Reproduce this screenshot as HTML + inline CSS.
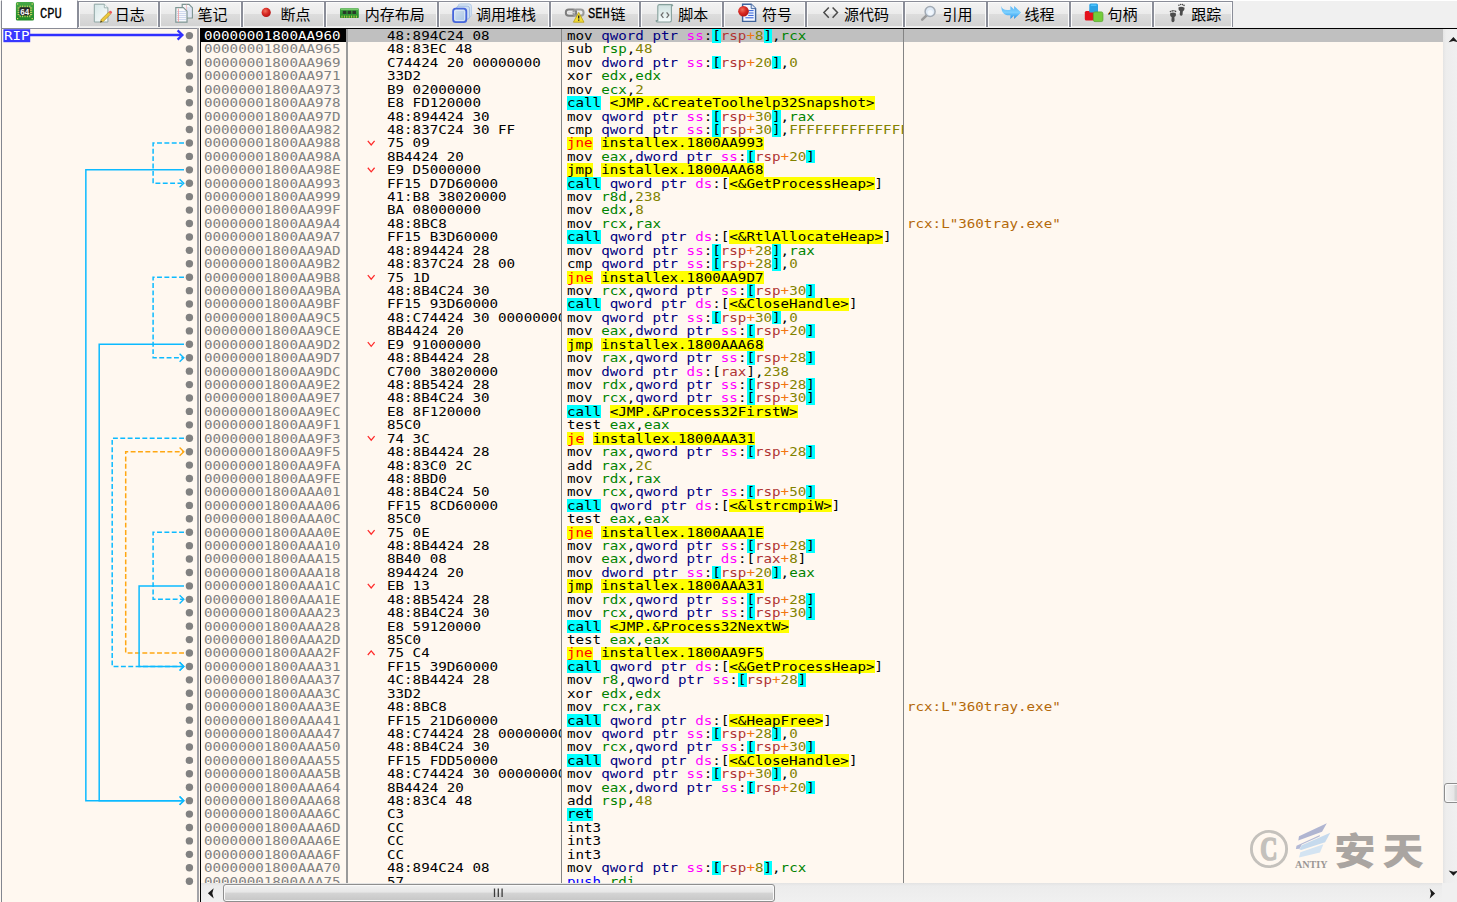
<!DOCTYPE html>
<html lang="zh-CN"><head><meta charset="utf-8"><title>x64dbg - CPU</title>
<style>
*{box-sizing:border-box}
html,body{margin:0;padding:0;overflow:hidden}
body{width:1457px;height:902px;overflow:hidden;position:relative;background:#fff8f0;font-family:"Liberation Sans","Noto Sans CJK SC",sans-serif}
#tabs{position:absolute;left:0;top:0;width:1457px;height:28px;background:#f0f0f0;border-top:1px solid #fff}
.tab{position:absolute;top:0;height:26px;border:1.2px solid #8a8d98;border-bottom:none;background:linear-gradient(#f3f3f3 0,#ebebeb 11.5px,#dddddd 12px,#d2d2d2 24px,#ececec 24.5px,#ececec 100%);box-shadow:inset 1px 1px 0 #fbfbfb,inset -1px 0 0 #fbfbfb}
.tab.sel{top:-1px;height:28px;background:#fff;box-shadow:none;border-top-color:#fff;border-left-color:#83868f}
.tl b{display:inline-block;font-weight:normal;font-size:15.2px;transform:scaleX(0.8);transform-origin:0 50%;width:22.4px;vertical-align:top;margin-left:1.7px;position:relative;top:-2.5px;-webkit-text-stroke:0.3px #000}
.tl{position:absolute;top:7.2px;height:17px;line-height:17px;font-size:15px;color:#000;white-space:pre;font-family:"Liberation Mono","Noto Sans CJK SC",sans-serif}
.ti{position:absolute}
#frameL{position:absolute;left:1px;top:1px;width:1.3px;height:901px;background:#838690}
#frameT{position:absolute;left:2px;top:28px;width:197px;height:1px;background:#8a8c96}
#sideR{position:absolute;left:197.3px;top:28px;width:1.9px;height:874px;background:#a3a3a8}
#blkL{position:absolute;left:200px;top:28px;width:1px;height:874px;background:#000}
#blkT{position:absolute;left:200px;top:28px;width:1257px;height:1px;background:#000}
.sep{position:absolute;top:29px;height:854px;background:#848484}
#selA{position:absolute;left:200px;top:29px;width:146.3px;height:13px;background:#000}
#selR{position:absolute;left:347.8px;top:29px;width:1095.2px;height:13px;background:#c0c0c0}
.col{position:absolute;top:0;height:883.3px;overflow:hidden}
#dis{position:absolute;left:0;top:0;width:1443px;height:883.3px;overflow:hidden;white-space:pre;font-family:"DejaVu Sans Mono","Liberation Mono",monospace;font-size:12px;line-height:13.4219px;color:#000}
.row{position:absolute;left:0;width:1443px;height:13.4219px}
.cel{position:absolute;top:0;height:13.4219px;overflow-x:clip;overflow-y:visible}
.cel p{position:absolute;left:0;top:0;margin:0;height:13.4219px;transform-origin:0 0;transform:scaleX(1.18221)}
.ca{left:201px;width:145.4px}.ca p{left:2.7px}
.cb{left:348px;width:213.4px}.cb p{left:38.6px}
.cd{left:562.6px;width:340.3px}.cd p{left:4.2px}
.cc{left:904.1px;width:538.9px;color:#b4690a}.cc p{left:2.6px}
.row i{font-style:normal}
.h{position:absolute;height:13.4219px}
.ca{color:#808080}
.cip .ca{color:#fff}
.s{color:#000080}.g{color:#ff00ff}.r{color:#008300}.b{color:#b03434}.o{color:#f27711}.v{color:#828200}.p{color:#0000ff}
.j{color:#ff0000}
.hc{background:#00ffff}.hy{background:#ffff00}
#side{position:absolute;left:0;top:0}
#hsb{position:absolute;left:201px;top:883.3px;width:1241px;height:19px;background:linear-gradient(#e3e3e3 0,#ececec 3px,#f0f0f0 100%)}
#hth{position:absolute;left:22.3px;top:0.6px;width:552px;height:18.6px;border:1.2px solid #8e8e8e;border-radius:3px;background:linear-gradient(#f2f2f2 0,#e6e6e6 45%,#d4d4d4 50%,#c6c6c6 100%);box-shadow:inset 0 0 0 1px #fafafa}
#vsb{position:absolute;left:1443px;top:29px;width:14px;height:854px;overflow:hidden;background:linear-gradient(90deg,#e4e4e4 0,#ededed 3px,#f0f0f0 100%)}
#vth{position:absolute;left:0.6px;top:754px;width:22px;height:19.6px;border:1.2px solid #8e8e8e;border-radius:3px;background:linear-gradient(90deg,#f2f2f2 0,#e6e6e6 45%,#d4d4d4 50%,#c6c6c6 100%);box-shadow:inset 0 0 0 1px #fafafa}
#corner{position:absolute;left:1442px;top:883px;width:15px;height:19px;background:#f0f0f0}
#wm{position:absolute;left:0;top:0}
</style></head>
<body>
<div id="tabs"><div class="tab sel" style="left:1px;width:77.2px"></div><div class="tab" style="left:78.2px;width:81.1px"></div><div class="tab" style="left:159.3px;width:83px"></div><div class="tab" style="left:242.3px;width:82.8px"></div><div class="tab" style="left:325.1px;width:112.5px"></div><div class="tab" style="left:437.6px;width:112.1px"></div><div class="tab" style="left:549.7px;width:90.5px"></div><div class="tab" style="left:640.2px;width:83px"></div><div class="tab" style="left:723.2px;width:82.8px"></div><div class="tab" style="left:806px;width:98px"></div><div class="tab" style="left:904px;width:82.8px"></div><div class="tab" style="left:986.8px;width:82.9px"></div><div class="tab" style="left:1069.7px;width:83px"></div><div class="tab" style="left:1152.7px;width:80.8px"></div><span class="tl" style="left:38.4px"><b>CPU</b></span><span class="tl" style="left:114.7px">日志</span><span class="tl" style="left:197.6px">笔记</span><span class="tl" style="left:280.5px">断点</span><span class="tl" style="left:364.7px">内存布局</span><span class="tl" style="left:475.9px">调用堆栈</span><span class="tl" style="left:586.3px"><b>SEH</b>链</span><span class="tl" style="left:678.3px">脚本</span><span class="tl" style="left:761.9px">符号</span><span class="tl" style="left:844px">源代码</span><span class="tl" style="left:942.4px">引用</span><span class="tl" style="left:1024.5px">线程</span><span class="tl" style="left:1107.5px">句柄</span><span class="tl" style="left:1191.3px">跟踪</span><svg class="ti" style="left:0;top:-1px" width="1457" height="29" viewBox="0 0 1457 29"><defs><linearGradient id="gPaper" x1="0" y1="0" x2="1" y2="1"><stop offset="0" stop-color="#d4e6e6"/><stop offset="1" stop-color="#ffffff"/></linearGradient><linearGradient id="gSq" x1="0" y1="0" x2="1" y2="1"><stop offset="0" stop-color="#d6e4f2"/><stop offset="1" stop-color="#a6c2e2"/></linearGradient><linearGradient id="gScr" x1="0" y1="0" x2="0" y2="1"><stop offset="0" stop-color="#cfe2e0"/><stop offset="1" stop-color="#f6fcfc"/></linearGradient><linearGradient id="gGrn" x1="0" y1="0" x2="0" y2="1"><stop offset="0" stop-color="#46a846"/><stop offset="1" stop-color="#1f8a25"/></linearGradient><linearGradient id="gArr" x1="0" y1="0" x2="0" y2="1"><stop offset="0" stop-color="#58b4f4"/><stop offset="0.5" stop-color="#7cd0ff"/><stop offset="1" stop-color="#1e8ee8"/></linearGradient><radialGradient id="gRed" cx="0.4" cy="0.35" r="0.7"><stop offset="0" stop-color="#f0705c"/><stop offset="0.5" stop-color="#d82a24"/><stop offset="1" stop-color="#b01010"/></radialGradient></defs><rect x="15.9" y="2.1" width="18.1" height="18.4" rx="1.6" fill="url(#gGrn)"/><g stroke="#e6d66a" stroke-width="0.9"><path d="M20.2 5.6v2M22.6 5.6v2M25 5.6v2M27.4 5.6v2M29.8 5.6v2M20.2 15.2v2M22.6 15.2v2M25 15.2v2M27.4 15.2v2M29.8 15.2v2M17.6 8h2.2M17.6 10.2h2.2M17.6 12.4h2.2M17.6 14.6h2.2M30 8h2.2M30 10.2h2.2M30 12.4h2.2M30 14.6h2.2"/></g><g fill="#e6d66a"><rect x="17" y="3.4" width="1.2" height="1.2"/><rect x="31.6" y="3.4" width="1.2" height="1.2"/><rect x="17" y="18" width="1.2" height="1.2"/><rect x="31.6" y="18" width="1.2" height="1.2"/></g><rect x="19.4" y="7.3" width="10.6" height="8.2" rx="1.4" fill="#262626"/><text x="24.7" y="14.5" text-anchor="middle" font-family="'Liberation Sans',sans-serif" font-weight="bold" font-size="8.4" fill="#f4f4f4" textLength="9" lengthAdjust="spacingAndGlyphs">64</text><path d="M94.3 4.2h10l3.6 3.6v14.2h-13.6z" fill="url(#gPaper)" stroke="#8fa6a4" stroke-width="1"/><path d="M104.3 4.2v3.6h3.6" fill="#f4fafa" stroke="#8fa6a4" stroke-width="0.8"/><path d="M100.4 22.3l0.9-3 7.4-7.2 2 2-7.3 7.3z" fill="#ecc83c" stroke="#a88a24" stroke-width="0.6"/><path d="M108.7 12.1l1-1a1 1 0 0 1 1.4 0l0.7 0.7a1 1 0 0 1 0 1.4l-1.1 0.9z" fill="#ee5a5a"/><path d="M100.3 22.4l0.6-1.8 1.2 1.2z" fill="#2a2a2a"/><path d="M182.2 4.4h6.8l3.4 3.4v10.2h-10.2z" fill="#f6f8fb" stroke="#7f9694" stroke-width="1.2"/><g stroke="#b7c6e6" stroke-width="0.7"><path d="M186.8 8h5M186.8 10h5M186.8 12h5M186.8 14h5M186.8 16h5"/></g><path d="M186.4 4.4v13.6" stroke="#f0a8a8" stroke-width="0.7"/><path d="M175.8 7.6h7.6l3.6 3.6v10.9h-11.2z" fill="#fbfcfe" stroke="#7f9694" stroke-width="1.2"/><g stroke="#b4c4e6" stroke-width="0.7"><path d="M176.8 11.6h9.2M176.8 13.6h9.2M176.8 15.6h9.2M176.8 17.6h9.2M176.8 19.6h9.2"/></g><path d="M178.4 8.6v13.4" stroke="#f09c9c" stroke-width="0.9"/><circle cx="266.2" cy="12.4" r="4.6" fill="url(#gRed)"/><rect x="340" y="8.2" width="18.8" height="9.8" rx="0.8" fill="url(#gGrn)"/><rect x="340.8" y="8.8" width="17.2" height="1.2" fill="#78c86c"/><g fill="#283a28"><rect x="342.8" y="10.8" width="3.6" height="3.2"/><rect x="347.6" y="10.8" width="3.6" height="3.2"/><rect x="352.4" y="10.8" width="3.6" height="3.2"/></g><g stroke="#d8cc50" stroke-width="0.9"><path d="M342 15.6v2.2M344.4 15.6v2.2M346.8 15.6v2.2M349.2 15.6v2.2M351.6 15.6v2.2M354 15.6v2.2M356.4 15.6v2.2"/></g><rect x="458" y="3.9" width="13.4" height="13.2" rx="2.4" fill="#d8e6f4" stroke="#b4cbe8" stroke-width="1"/><rect x="456.4" y="6.2" width="13.2" height="13" rx="2.4" fill="#cfdff1" stroke="#a0bce2" stroke-width="1"/><rect x="453.1" y="8.7" width="13.2" height="13.4" rx="2.6" fill="url(#gSq)" stroke="#4666dc" stroke-width="1.8"/><rect x="454.8" y="10.4" width="9.8" height="10" rx="1.2" fill="none" stroke="#e4eef8" stroke-width="0.8"/><rect x="565.8" y="9.6" width="10.4" height="6.2" rx="3.1" fill="none" stroke="#7e7e7e" stroke-width="2"/><rect x="573.4" y="9.6" width="10.2" height="6.2" rx="3.1" fill="none" stroke="#9a9a9a" stroke-width="2"/><path d="M568 12.6h6" stroke="#d8d8d8" stroke-width="0.9"/><path d="M578.7 12.4l5.3 9.8h-10.6z" fill="#f2dc34" stroke="#b8a018" stroke-width="0.8" stroke-linejoin="round"/><path d="M578.7 15.4v3.2M578.7 19.6v1.2" stroke="#2a2a2a" stroke-width="1.4"/><path d="M659.2 4.6h12.4q1.4 0.2 1 1.2h-1.2v14.4q0 1.6-1.6 1.8h-12.6q-1.2-0.2-1-1.4h1.6v-14.4q0-1.4 1.4-1.6z" fill="url(#gScr)" stroke="#86a09c" stroke-width="1.1"/><path d="M663.4 12.4l-2.2 2.7 2.2 2.7M666.6 12.4l2.2 2.7-2.2 2.7" fill="none" stroke="#6e6e6e" stroke-width="1.3"/><path d="M742.6 4.2h8.6l4.4 4.4v12.8h-13z" fill="#f2f6ff" stroke="#3f639c" stroke-width="1.4"/><path d="M751.2 4.2v4.4h4.4" fill="#dfe8f8" stroke="#3f639c" stroke-width="0.9"/><g stroke="#2f5fd8" stroke-width="1"><path d="M748.2 10.6h5.4M748.2 13h5.4M748.2 15.4h5.4M745.4 17.8h8.2"/></g><circle cx="743.5" cy="11.3" r="5.3" fill="url(#gRed)"/><path d="M828.8 7.4l-4.9 5.2 4.9 5.2M832.6 7.4l4.9 5.2-4.9 5.2" fill="none" stroke="#4a4a4a" stroke-width="1.5"/><path d="M922.2 19.6l4.2-4" stroke="#9a9a9a" stroke-width="2.6" stroke-linecap="round"/><circle cx="930.1" cy="11.5" r="5" fill="#dfeaf6" stroke="#a2aab4" stroke-width="1.5"/><circle cx="930.3" cy="12.6" r="2.6" fill="#f2f7fc"/><path d="M1001.5 6C1002 9.8 1005 10.4 1010.4 9.8L1010.4 6L1014.1 9.6L1014.1 6L1021.1 12.4L1014.1 18.9L1014.1 15.4L1010.4 18.9L1010.4 15.2C1004 16 1001 12 1001.5 6Z" fill="url(#gArr)"/><rect x="1089.3" y="3.4" width="8.7" height="9.2" rx="1.6" fill="#2aa2e4"/><rect x="1090.6" y="4.4" width="6.1" height="1.6" rx="0.8" fill="#4cc4ff"/><rect x="1084.8" y="10.9" width="9.2" height="9.7" rx="1.6" fill="#e4121c"/><rect x="1089.3" y="9.6" width="8.7" height="3" rx="1.2" fill="#2aa2e4"/><rect x="1093.4" y="11.9" width="9.5" height="9.7" rx="1.6" fill="#74cc3c" stroke="#58a82c" stroke-width="0.8"/><g fill="#4c4c4c"><path d="M1170 13.4q3-1.6 6 0q0.4 2.4-1.6 3.6l0.2 3.6q-0.4 1.6-1.7 1.6q-1.4 0-1.5-1.8l0.3-3.2q-2-1.4-1.7-3.8z"/><path d="M1178.4 7.4q3-1.6 6.2 0.4q0.2 2.4-1.8 3.6l-0.2 3q-0.4 1.4-1.6 1.3q-1.3-0.1-1.3-1.6l0.4-2.9q-2-1.4-1.7-3.8z"/><circle cx="1170.5" cy="11.6" r="0.8"/><circle cx="1172.2" cy="10.9" r="0.8"/><circle cx="1173.9" cy="10.8" r="0.8"/><circle cx="1175.5" cy="11.4" r="0.8"/><circle cx="1178.9" cy="5.2" r="0.8"/><circle cx="1180.6" cy="4.5" r="0.8"/><circle cx="1182.4" cy="4.6" r="0.8"/><circle cx="1184" cy="5.4" r="0.8"/></g></svg></div>
<div id="frameL"></div><div id="frameT"></div><div id="sideR"></div>
<div id="selA"></div><div id="selR"></div>
<div id="blkL"></div><div id="blkT"></div>
<div class="sep" style="left:346px;width:2px;background:#9a9a9a"></div><div class="sep" style="left:561px;width:1px"></div><div class="sep" style="left:903px;width:1px"></div>
<svg id="side" width="200" height="902" viewBox="0 0 200 902" fill="none"><path d="M184 142.99H153.1V183.25H183.4" stroke="#0cbaff" stroke-width="1.5" stroke-dasharray="4.9 2.45"/><path d="M179.6 179.15L183.8 183.25L179.6 187.35" stroke="#0cbaff" stroke-width="1.4"/><path d="M184 169.83H85.85V800.66H183.4" stroke="#0cbaff" stroke-width="1.5"/><path d="M179.6 796.56L183.8 800.66L179.6 804.76" stroke="#0cbaff" stroke-width="1.4"/><path d="M184 277.2H153.1V357.74H183.4" stroke="#0cbaff" stroke-width="1.5" stroke-dasharray="4.9 2.45"/><path d="M179.6 353.64L183.8 357.74L179.6 361.84" stroke="#0cbaff" stroke-width="1.4"/><path d="M184 344.31H99.2V800.66H183.4" stroke="#0cbaff" stroke-width="1.5"/><path d="M179.6 796.56L183.8 800.66L179.6 804.76" stroke="#0cbaff" stroke-width="1.4"/><path d="M184 438.27H112.2V666.44H183.4" stroke="#0cbaff" stroke-width="1.5" stroke-dasharray="4.9 2.45"/><path d="M179.6 662.34L183.8 666.44L179.6 670.54" stroke="#0cbaff" stroke-width="1.4"/><path d="M184 653.02H125.7V451.69H183.4" stroke="#ffa712" stroke-width="1.5" stroke-dasharray="4.9 2.45"/><path d="M179.6 447.59L183.8 451.69L179.6 455.79" stroke="#ffa712" stroke-width="1.4"/><path d="M184 532.22H153.1V599.33H183.4" stroke="#0cbaff" stroke-width="1.5" stroke-dasharray="4.9 2.45"/><path d="M179.6 595.23L183.8 599.33L179.6 603.43" stroke="#0cbaff" stroke-width="1.4"/><path d="M184 585.91H139.1V666.44H183.4" stroke="#0cbaff" stroke-width="1.5"/><path d="M179.6 662.34L183.8 666.44L179.6 670.54" stroke="#0cbaff" stroke-width="1.4"/><g fill="#818181"><circle cx="189.4" cy="35.61" r="3.7"/><circle cx="189.4" cy="49.03" r="3.7"/><circle cx="189.4" cy="62.45" r="3.7"/><circle cx="189.4" cy="75.88" r="3.7"/><circle cx="189.4" cy="89.3" r="3.7"/><circle cx="189.4" cy="102.72" r="3.7"/><circle cx="189.4" cy="116.14" r="3.7"/><circle cx="189.4" cy="129.56" r="3.7"/><circle cx="189.4" cy="142.99" r="3.7"/><circle cx="189.4" cy="156.41" r="3.7"/><circle cx="189.4" cy="169.83" r="3.7"/><circle cx="189.4" cy="183.25" r="3.7"/><circle cx="189.4" cy="196.67" r="3.7"/><circle cx="189.4" cy="210.1" r="3.7"/><circle cx="189.4" cy="223.52" r="3.7"/><circle cx="189.4" cy="236.94" r="3.7"/><circle cx="189.4" cy="250.36" r="3.7"/><circle cx="189.4" cy="263.78" r="3.7"/><circle cx="189.4" cy="277.2" r="3.7"/><circle cx="189.4" cy="290.63" r="3.7"/><circle cx="189.4" cy="304.05" r="3.7"/><circle cx="189.4" cy="317.47" r="3.7"/><circle cx="189.4" cy="330.89" r="3.7"/><circle cx="189.4" cy="344.31" r="3.7"/><circle cx="189.4" cy="357.74" r="3.7"/><circle cx="189.4" cy="371.16" r="3.7"/><circle cx="189.4" cy="384.58" r="3.7"/><circle cx="189.4" cy="398" r="3.7"/><circle cx="189.4" cy="411.42" r="3.7"/><circle cx="189.4" cy="424.85" r="3.7"/><circle cx="189.4" cy="438.27" r="3.7"/><circle cx="189.4" cy="451.69" r="3.7"/><circle cx="189.4" cy="465.11" r="3.7"/><circle cx="189.4" cy="478.53" r="3.7"/><circle cx="189.4" cy="491.95" r="3.7"/><circle cx="189.4" cy="505.38" r="3.7"/><circle cx="189.4" cy="518.8" r="3.7"/><circle cx="189.4" cy="532.22" r="3.7"/><circle cx="189.4" cy="545.64" r="3.7"/><circle cx="189.4" cy="559.06" r="3.7"/><circle cx="189.4" cy="572.49" r="3.7"/><circle cx="189.4" cy="585.91" r="3.7"/><circle cx="189.4" cy="599.33" r="3.7"/><circle cx="189.4" cy="612.75" r="3.7"/><circle cx="189.4" cy="626.17" r="3.7"/><circle cx="189.4" cy="639.6" r="3.7"/><circle cx="189.4" cy="653.02" r="3.7"/><circle cx="189.4" cy="666.44" r="3.7"/><circle cx="189.4" cy="679.86" r="3.7"/><circle cx="189.4" cy="693.28" r="3.7"/><circle cx="189.4" cy="706.7" r="3.7"/><circle cx="189.4" cy="720.13" r="3.7"/><circle cx="189.4" cy="733.55" r="3.7"/><circle cx="189.4" cy="746.97" r="3.7"/><circle cx="189.4" cy="760.39" r="3.7"/><circle cx="189.4" cy="773.81" r="3.7"/><circle cx="189.4" cy="787.24" r="3.7"/><circle cx="189.4" cy="800.66" r="3.7"/><circle cx="189.4" cy="814.08" r="3.7"/><circle cx="189.4" cy="827.5" r="3.7"/><circle cx="189.4" cy="840.92" r="3.7"/><circle cx="189.4" cy="854.35" r="3.7"/><circle cx="189.4" cy="867.77" r="3.7"/><circle cx="189.4" cy="881.19" r="3.7"/></g><rect x="3.4" y="29.2" width="26.8" height="13" fill="#3838ff"/><path d="M30 35.01H182" stroke="#3030ff" stroke-width="2.4"/><path d="M177.6 30.41L182.4 35.01L177.6 39.61" stroke="#3030ff" stroke-width="2.3" stroke-linejoin="miter"/><text x="3.9" y="39.9" fill="#fff" font-family="'DejaVu Sans Mono','Liberation Mono',monospace" font-size="12.2" textLength="25.7" lengthAdjust="spacingAndGlyphs">RIP</text></svg>
<div class="col" style="left:562.6px;width:340.3px"><div class="h hc" style="left:149.797px;top:29.15px;width:8.541px"></div><div class="h hc" style="left:201.043px;top:29.15px;width:8.541px"></div><div class="h hc" style="left:149.797px;top:55.9937px;width:8.541px"></div><div class="h hc" style="left:209.584px;top:55.9937px;width:8.541px"></div><div class="h hc" style="left:4.6px;top:96.2594px;width:34.164px"></div><div class="h hy" style="left:47.305px;top:96.2594px;width:264.771px"></div><div class="h hc" style="left:149.797px;top:109.6813px;width:8.541px"></div><div class="h hc" style="left:209.584px;top:109.6813px;width:8.541px"></div><div class="h hc" style="left:149.797px;top:123.1031px;width:8.541px"></div><div class="h hc" style="left:209.584px;top:123.1031px;width:8.541px"></div><div class="h hy" style="left:4.6px;top:136.525px;width:25.623px"></div><div class="h hy" style="left:38.764px;top:136.525px;width:162.279px"></div><div class="h hc" style="left:183.961px;top:149.9469px;width:8.541px"></div><div class="h hc" style="left:243.748px;top:149.9469px;width:8.541px"></div><div class="h hy" style="left:4.6px;top:163.3688px;width:25.623px"></div><div class="h hy" style="left:38.764px;top:163.3688px;width:162.279px"></div><div class="h hc" style="left:4.6px;top:176.7906px;width:34.164px"></div><div class="h hy" style="left:166.879px;top:176.7906px;width:145.197px"></div><div class="h hc" style="left:4.6px;top:230.4781px;width:34.164px"></div><div class="h hy" style="left:166.879px;top:230.4781px;width:153.738px"></div><div class="h hc" style="left:149.797px;top:243.9px;width:8.541px"></div><div class="h hc" style="left:209.584px;top:243.9px;width:8.541px"></div><div class="h hc" style="left:149.797px;top:257.3219px;width:8.541px"></div><div class="h hc" style="left:209.584px;top:257.3219px;width:8.541px"></div><div class="h hy" style="left:4.6px;top:270.7437px;width:25.623px"></div><div class="h hy" style="left:38.764px;top:270.7437px;width:162.279px"></div><div class="h hc" style="left:183.961px;top:284.1656px;width:8.541px"></div><div class="h hc" style="left:243.748px;top:284.1656px;width:8.541px"></div><div class="h hc" style="left:4.6px;top:297.5875px;width:34.164px"></div><div class="h hy" style="left:166.879px;top:297.5875px;width:119.574px"></div><div class="h hc" style="left:149.797px;top:311.0094px;width:8.541px"></div><div class="h hc" style="left:209.584px;top:311.0094px;width:8.541px"></div><div class="h hc" style="left:183.961px;top:324.4312px;width:8.541px"></div><div class="h hc" style="left:243.748px;top:324.4312px;width:8.541px"></div><div class="h hy" style="left:4.6px;top:337.8531px;width:25.623px"></div><div class="h hy" style="left:38.764px;top:337.8531px;width:162.279px"></div><div class="h hc" style="left:183.961px;top:351.275px;width:8.541px"></div><div class="h hc" style="left:243.748px;top:351.275px;width:8.541px"></div><div class="h hc" style="left:183.961px;top:378.1187px;width:8.541px"></div><div class="h hc" style="left:243.748px;top:378.1187px;width:8.541px"></div><div class="h hc" style="left:183.961px;top:391.5406px;width:8.541px"></div><div class="h hc" style="left:243.748px;top:391.5406px;width:8.541px"></div><div class="h hc" style="left:4.6px;top:404.9625px;width:34.164px"></div><div class="h hy" style="left:47.305px;top:404.9625px;width:187.902px"></div><div class="h hy" style="left:4.6px;top:431.8062px;width:17.082px"></div><div class="h hy" style="left:30.223px;top:431.8062px;width:162.279px"></div><div class="h hc" style="left:183.961px;top:445.2281px;width:8.541px"></div><div class="h hc" style="left:243.748px;top:445.2281px;width:8.541px"></div><div class="h hc" style="left:183.961px;top:485.4937px;width:8.541px"></div><div class="h hc" style="left:243.748px;top:485.4937px;width:8.541px"></div><div class="h hc" style="left:4.6px;top:498.9156px;width:34.164px"></div><div class="h hy" style="left:166.879px;top:498.9156px;width:102.492px"></div><div class="h hy" style="left:4.6px;top:525.7594px;width:25.623px"></div><div class="h hy" style="left:38.764px;top:525.7594px;width:162.279px"></div><div class="h hc" style="left:183.961px;top:539.1812px;width:8.541px"></div><div class="h hc" style="left:243.748px;top:539.1812px;width:8.541px"></div><div class="h hc" style="left:149.797px;top:566.025px;width:8.541px"></div><div class="h hc" style="left:209.584px;top:566.025px;width:8.541px"></div><div class="h hy" style="left:4.6px;top:579.4469px;width:25.623px"></div><div class="h hy" style="left:38.764px;top:579.4469px;width:162.279px"></div><div class="h hc" style="left:183.961px;top:592.8687px;width:8.541px"></div><div class="h hc" style="left:243.748px;top:592.8687px;width:8.541px"></div><div class="h hc" style="left:183.961px;top:606.2906px;width:8.541px"></div><div class="h hc" style="left:243.748px;top:606.2906px;width:8.541px"></div><div class="h hc" style="left:4.6px;top:619.7125px;width:34.164px"></div><div class="h hy" style="left:47.305px;top:619.7125px;width:179.361px"></div><div class="h hy" style="left:4.6px;top:646.5562px;width:25.623px"></div><div class="h hy" style="left:38.764px;top:646.5562px;width:162.279px"></div><div class="h hc" style="left:4.6px;top:659.9781px;width:34.164px"></div><div class="h hy" style="left:166.879px;top:659.9781px;width:145.197px"></div><div class="h hc" style="left:175.42px;top:673.4px;width:8.541px"></div><div class="h hc" style="left:235.207px;top:673.4px;width:8.541px"></div><div class="h hc" style="left:4.6px;top:713.6656px;width:34.164px"></div><div class="h hy" style="left:166.879px;top:713.6656px;width:93.951px"></div><div class="h hc" style="left:149.797px;top:727.0875px;width:8.541px"></div><div class="h hc" style="left:209.584px;top:727.0875px;width:8.541px"></div><div class="h hc" style="left:183.961px;top:740.5094px;width:8.541px"></div><div class="h hc" style="left:243.748px;top:740.5094px;width:8.541px"></div><div class="h hc" style="left:4.6px;top:753.9312px;width:34.164px"></div><div class="h hy" style="left:166.879px;top:753.9312px;width:119.574px"></div><div class="h hc" style="left:149.797px;top:767.3531px;width:8.541px"></div><div class="h hc" style="left:209.584px;top:767.3531px;width:8.541px"></div><div class="h hc" style="left:183.961px;top:780.775px;width:8.541px"></div><div class="h hc" style="left:243.748px;top:780.775px;width:8.541px"></div><div class="h hc" style="left:4.6px;top:807.6187px;width:25.623px"></div><div class="h hc" style="left:149.797px;top:861.3062px;width:8.541px"></div><div class="h hc" style="left:201.043px;top:861.3062px;width:8.541px"></div></div>
<div id="dis">
<div class="row cip" style="top:30px"><div class="cel ca"><p>00000001800AA960</p></div><div class="cel cb"><p>48:894C24 08</p></div><div class="cel cd"><p>mov <i class="s">qword ptr</i> <i class="g">ss</i>:[<i class="b">rsp</i><i class="o">+</i><i class="v">8</i>],<i class="r">rcx</i></p></div></div>
<div class="row" style="top:43.4219px"><div class="cel ca"><p>00000001800AA965</p></div><div class="cel cb"><p>48:83EC 48</p></div><div class="cel cd"><p>sub <i class="r">rsp</i>,<i class="v">48</i></p></div></div>
<div class="row" style="top:56.8438px"><div class="cel ca"><p>00000001800AA969</p></div><div class="cel cb"><p>C74424 20 00000000</p></div><div class="cel cd"><p>mov <i class="s">dword ptr</i> <i class="g">ss</i>:[<i class="b">rsp</i><i class="o">+</i><i class="v">20</i>],<i class="v">0</i></p></div></div>
<div class="row" style="top:70.2656px"><div class="cel ca"><p>00000001800AA971</p></div><div class="cel cb"><p>33D2</p></div><div class="cel cd"><p>xor <i class="r">edx</i>,<i class="r">edx</i></p></div></div>
<div class="row" style="top:83.6875px"><div class="cel ca"><p>00000001800AA973</p></div><div class="cel cb"><p>B9 02000000</p></div><div class="cel cd"><p>mov <i class="r">ecx</i>,<i class="v">2</i></p></div></div>
<div class="row" style="top:97.1094px"><div class="cel ca"><p>00000001800AA978</p></div><div class="cel cb"><p>E8 FD120000</p></div><div class="cel cd"><p>call &lt;JMP.&amp;CreateToolhelp32Snapshot&gt;</p></div></div>
<div class="row" style="top:110.5312px"><div class="cel ca"><p>00000001800AA97D</p></div><div class="cel cb"><p>48:894424 30</p></div><div class="cel cd"><p>mov <i class="s">qword ptr</i> <i class="g">ss</i>:[<i class="b">rsp</i><i class="o">+</i><i class="v">30</i>],<i class="r">rax</i></p></div></div>
<div class="row" style="top:123.9531px"><div class="cel ca"><p>00000001800AA982</p></div><div class="cel cb"><p>48:837C24 30 FF</p></div><div class="cel cd"><p>cmp <i class="s">qword ptr</i> <i class="g">ss</i>:[<i class="b">rsp</i><i class="o">+</i><i class="v">30</i>],<i class="v">FFFFFFFFFFFFFFFF</i></p></div></div>
<div class="row" style="top:137.375px"><div class="cel ca"><p>00000001800AA988</p></div><div class="cel cb"><p>75 09</p></div><div class="cel cd"><p><i class="j">jne</i> installex.1800AA993</p></div></div>
<div class="row" style="top:150.7969px"><div class="cel ca"><p>00000001800AA98A</p></div><div class="cel cb"><p>8B4424 20</p></div><div class="cel cd"><p>mov <i class="r">eax</i>,<i class="s">dword ptr</i> <i class="g">ss</i>:[<i class="b">rsp</i><i class="o">+</i><i class="v">20</i>]</p></div></div>
<div class="row" style="top:164.2188px"><div class="cel ca"><p>00000001800AA98E</p></div><div class="cel cb"><p>E9 D5000000</p></div><div class="cel cd"><p>jmp installex.1800AAA68</p></div></div>
<div class="row" style="top:177.6406px"><div class="cel ca"><p>00000001800AA993</p></div><div class="cel cb"><p>FF15 D7D60000</p></div><div class="cel cd"><p>call <i class="s">qword ptr</i> <i class="g">ds</i>:[&lt;&amp;GetProcessHeap&gt;]</p></div></div>
<div class="row" style="top:191.0625px"><div class="cel ca"><p>00000001800AA999</p></div><div class="cel cb"><p>41:B8 38020000</p></div><div class="cel cd"><p>mov <i class="r">r8d</i>,<i class="v">238</i></p></div></div>
<div class="row" style="top:204.4844px"><div class="cel ca"><p>00000001800AA99F</p></div><div class="cel cb"><p>BA 08000000</p></div><div class="cel cd"><p>mov <i class="r">edx</i>,<i class="v">8</i></p></div></div>
<div class="row" style="top:217.9062px"><div class="cel ca"><p>00000001800AA9A4</p></div><div class="cel cb"><p>48:8BC8</p></div><div class="cel cd"><p>mov <i class="r">rcx</i>,<i class="r">rax</i></p></div><div class="cel cc"><p>rcx:L"360tray.exe"</p></div></div>
<div class="row" style="top:231.3281px"><div class="cel ca"><p>00000001800AA9A7</p></div><div class="cel cb"><p>FF15 B3D60000</p></div><div class="cel cd"><p>call <i class="s">qword ptr</i> <i class="g">ds</i>:[&lt;&amp;RtlAllocateHeap&gt;]</p></div></div>
<div class="row" style="top:244.75px"><div class="cel ca"><p>00000001800AA9AD</p></div><div class="cel cb"><p>48:894424 28</p></div><div class="cel cd"><p>mov <i class="s">qword ptr</i> <i class="g">ss</i>:[<i class="b">rsp</i><i class="o">+</i><i class="v">28</i>],<i class="r">rax</i></p></div></div>
<div class="row" style="top:258.1719px"><div class="cel ca"><p>00000001800AA9B2</p></div><div class="cel cb"><p>48:837C24 28 00</p></div><div class="cel cd"><p>cmp <i class="s">qword ptr</i> <i class="g">ss</i>:[<i class="b">rsp</i><i class="o">+</i><i class="v">28</i>],<i class="v">0</i></p></div></div>
<div class="row" style="top:271.5938px"><div class="cel ca"><p>00000001800AA9B8</p></div><div class="cel cb"><p>75 1D</p></div><div class="cel cd"><p><i class="j">jne</i> installex.1800AA9D7</p></div></div>
<div class="row" style="top:285.0156px"><div class="cel ca"><p>00000001800AA9BA</p></div><div class="cel cb"><p>48:8B4C24 30</p></div><div class="cel cd"><p>mov <i class="r">rcx</i>,<i class="s">qword ptr</i> <i class="g">ss</i>:[<i class="b">rsp</i><i class="o">+</i><i class="v">30</i>]</p></div></div>
<div class="row" style="top:298.4375px"><div class="cel ca"><p>00000001800AA9BF</p></div><div class="cel cb"><p>FF15 93D60000</p></div><div class="cel cd"><p>call <i class="s">qword ptr</i> <i class="g">ds</i>:[&lt;&amp;CloseHandle&gt;]</p></div></div>
<div class="row" style="top:311.8594px"><div class="cel ca"><p>00000001800AA9C5</p></div><div class="cel cb"><p>48:C74424 30 00000000</p></div><div class="cel cd"><p>mov <i class="s">qword ptr</i> <i class="g">ss</i>:[<i class="b">rsp</i><i class="o">+</i><i class="v">30</i>],<i class="v">0</i></p></div></div>
<div class="row" style="top:325.2812px"><div class="cel ca"><p>00000001800AA9CE</p></div><div class="cel cb"><p>8B4424 20</p></div><div class="cel cd"><p>mov <i class="r">eax</i>,<i class="s">dword ptr</i> <i class="g">ss</i>:[<i class="b">rsp</i><i class="o">+</i><i class="v">20</i>]</p></div></div>
<div class="row" style="top:338.7031px"><div class="cel ca"><p>00000001800AA9D2</p></div><div class="cel cb"><p>E9 91000000</p></div><div class="cel cd"><p>jmp installex.1800AAA68</p></div></div>
<div class="row" style="top:352.125px"><div class="cel ca"><p>00000001800AA9D7</p></div><div class="cel cb"><p>48:8B4424 28</p></div><div class="cel cd"><p>mov <i class="r">rax</i>,<i class="s">qword ptr</i> <i class="g">ss</i>:[<i class="b">rsp</i><i class="o">+</i><i class="v">28</i>]</p></div></div>
<div class="row" style="top:365.5469px"><div class="cel ca"><p>00000001800AA9DC</p></div><div class="cel cb"><p>C700 38020000</p></div><div class="cel cd"><p>mov <i class="s">dword ptr</i> <i class="g">ds</i>:[<i class="b">rax</i>],<i class="v">238</i></p></div></div>
<div class="row" style="top:378.9688px"><div class="cel ca"><p>00000001800AA9E2</p></div><div class="cel cb"><p>48:8B5424 28</p></div><div class="cel cd"><p>mov <i class="r">rdx</i>,<i class="s">qword ptr</i> <i class="g">ss</i>:[<i class="b">rsp</i><i class="o">+</i><i class="v">28</i>]</p></div></div>
<div class="row" style="top:392.3906px"><div class="cel ca"><p>00000001800AA9E7</p></div><div class="cel cb"><p>48:8B4C24 30</p></div><div class="cel cd"><p>mov <i class="r">rcx</i>,<i class="s">qword ptr</i> <i class="g">ss</i>:[<i class="b">rsp</i><i class="o">+</i><i class="v">30</i>]</p></div></div>
<div class="row" style="top:405.8125px"><div class="cel ca"><p>00000001800AA9EC</p></div><div class="cel cb"><p>E8 8F120000</p></div><div class="cel cd"><p>call &lt;JMP.&amp;Process32FirstW&gt;</p></div></div>
<div class="row" style="top:419.2344px"><div class="cel ca"><p>00000001800AA9F1</p></div><div class="cel cb"><p>85C0</p></div><div class="cel cd"><p>test <i class="r">eax</i>,<i class="r">eax</i></p></div></div>
<div class="row" style="top:432.6562px"><div class="cel ca"><p>00000001800AA9F3</p></div><div class="cel cb"><p>74 3C</p></div><div class="cel cd"><p><i class="j">je</i> installex.1800AAA31</p></div></div>
<div class="row" style="top:446.0781px"><div class="cel ca"><p>00000001800AA9F5</p></div><div class="cel cb"><p>48:8B4424 28</p></div><div class="cel cd"><p>mov <i class="r">rax</i>,<i class="s">qword ptr</i> <i class="g">ss</i>:[<i class="b">rsp</i><i class="o">+</i><i class="v">28</i>]</p></div></div>
<div class="row" style="top:459.5px"><div class="cel ca"><p>00000001800AA9FA</p></div><div class="cel cb"><p>48:83C0 2C</p></div><div class="cel cd"><p>add <i class="r">rax</i>,<i class="v">2C</i></p></div></div>
<div class="row" style="top:472.9219px"><div class="cel ca"><p>00000001800AA9FE</p></div><div class="cel cb"><p>48:8BD0</p></div><div class="cel cd"><p>mov <i class="r">rdx</i>,<i class="r">rax</i></p></div></div>
<div class="row" style="top:486.3438px"><div class="cel ca"><p>00000001800AAA01</p></div><div class="cel cb"><p>48:8B4C24 50</p></div><div class="cel cd"><p>mov <i class="r">rcx</i>,<i class="s">qword ptr</i> <i class="g">ss</i>:[<i class="b">rsp</i><i class="o">+</i><i class="v">50</i>]</p></div></div>
<div class="row" style="top:499.7656px"><div class="cel ca"><p>00000001800AAA06</p></div><div class="cel cb"><p>FF15 8CD60000</p></div><div class="cel cd"><p>call <i class="s">qword ptr</i> <i class="g">ds</i>:[&lt;&amp;lstrcmpiW&gt;]</p></div></div>
<div class="row" style="top:513.1875px"><div class="cel ca"><p>00000001800AAA0C</p></div><div class="cel cb"><p>85C0</p></div><div class="cel cd"><p>test <i class="r">eax</i>,<i class="r">eax</i></p></div></div>
<div class="row" style="top:526.6094px"><div class="cel ca"><p>00000001800AAA0E</p></div><div class="cel cb"><p>75 0E</p></div><div class="cel cd"><p><i class="j">jne</i> installex.1800AAA1E</p></div></div>
<div class="row" style="top:540.0312px"><div class="cel ca"><p>00000001800AAA10</p></div><div class="cel cb"><p>48:8B4424 28</p></div><div class="cel cd"><p>mov <i class="r">rax</i>,<i class="s">qword ptr</i> <i class="g">ss</i>:[<i class="b">rsp</i><i class="o">+</i><i class="v">28</i>]</p></div></div>
<div class="row" style="top:553.4531px"><div class="cel ca"><p>00000001800AAA15</p></div><div class="cel cb"><p>8B40 08</p></div><div class="cel cd"><p>mov <i class="r">eax</i>,<i class="s">dword ptr</i> <i class="g">ds</i>:[<i class="b">rax</i><i class="o">+</i><i class="v">8</i>]</p></div></div>
<div class="row" style="top:566.875px"><div class="cel ca"><p>00000001800AAA18</p></div><div class="cel cb"><p>894424 20</p></div><div class="cel cd"><p>mov <i class="s">dword ptr</i> <i class="g">ss</i>:[<i class="b">rsp</i><i class="o">+</i><i class="v">20</i>],<i class="r">eax</i></p></div></div>
<div class="row" style="top:580.2969px"><div class="cel ca"><p>00000001800AAA1C</p></div><div class="cel cb"><p>EB 13</p></div><div class="cel cd"><p>jmp installex.1800AAA31</p></div></div>
<div class="row" style="top:593.7188px"><div class="cel ca"><p>00000001800AAA1E</p></div><div class="cel cb"><p>48:8B5424 28</p></div><div class="cel cd"><p>mov <i class="r">rdx</i>,<i class="s">qword ptr</i> <i class="g">ss</i>:[<i class="b">rsp</i><i class="o">+</i><i class="v">28</i>]</p></div></div>
<div class="row" style="top:607.1406px"><div class="cel ca"><p>00000001800AAA23</p></div><div class="cel cb"><p>48:8B4C24 30</p></div><div class="cel cd"><p>mov <i class="r">rcx</i>,<i class="s">qword ptr</i> <i class="g">ss</i>:[<i class="b">rsp</i><i class="o">+</i><i class="v">30</i>]</p></div></div>
<div class="row" style="top:620.5625px"><div class="cel ca"><p>00000001800AAA28</p></div><div class="cel cb"><p>E8 59120000</p></div><div class="cel cd"><p>call &lt;JMP.&amp;Process32NextW&gt;</p></div></div>
<div class="row" style="top:633.9844px"><div class="cel ca"><p>00000001800AAA2D</p></div><div class="cel cb"><p>85C0</p></div><div class="cel cd"><p>test <i class="r">eax</i>,<i class="r">eax</i></p></div></div>
<div class="row" style="top:647.4062px"><div class="cel ca"><p>00000001800AAA2F</p></div><div class="cel cb"><p>75 C4</p></div><div class="cel cd"><p><i class="j">jne</i> installex.1800AA9F5</p></div></div>
<div class="row" style="top:660.8281px"><div class="cel ca"><p>00000001800AAA31</p></div><div class="cel cb"><p>FF15 39D60000</p></div><div class="cel cd"><p>call <i class="s">qword ptr</i> <i class="g">ds</i>:[&lt;&amp;GetProcessHeap&gt;]</p></div></div>
<div class="row" style="top:674.25px"><div class="cel ca"><p>00000001800AAA37</p></div><div class="cel cb"><p>4C:8B4424 28</p></div><div class="cel cd"><p>mov <i class="r">r8</i>,<i class="s">qword ptr</i> <i class="g">ss</i>:[<i class="b">rsp</i><i class="o">+</i><i class="v">28</i>]</p></div></div>
<div class="row" style="top:687.6719px"><div class="cel ca"><p>00000001800AAA3C</p></div><div class="cel cb"><p>33D2</p></div><div class="cel cd"><p>xor <i class="r">edx</i>,<i class="r">edx</i></p></div></div>
<div class="row" style="top:701.0938px"><div class="cel ca"><p>00000001800AAA3E</p></div><div class="cel cb"><p>48:8BC8</p></div><div class="cel cd"><p>mov <i class="r">rcx</i>,<i class="r">rax</i></p></div><div class="cel cc"><p>rcx:L"360tray.exe"</p></div></div>
<div class="row" style="top:714.5156px"><div class="cel ca"><p>00000001800AAA41</p></div><div class="cel cb"><p>FF15 21D60000</p></div><div class="cel cd"><p>call <i class="s">qword ptr</i> <i class="g">ds</i>:[&lt;&amp;HeapFree&gt;]</p></div></div>
<div class="row" style="top:727.9375px"><div class="cel ca"><p>00000001800AAA47</p></div><div class="cel cb"><p>48:C74424 28 00000000</p></div><div class="cel cd"><p>mov <i class="s">qword ptr</i> <i class="g">ss</i>:[<i class="b">rsp</i><i class="o">+</i><i class="v">28</i>],<i class="v">0</i></p></div></div>
<div class="row" style="top:741.3594px"><div class="cel ca"><p>00000001800AAA50</p></div><div class="cel cb"><p>48:8B4C24 30</p></div><div class="cel cd"><p>mov <i class="r">rcx</i>,<i class="s">qword ptr</i> <i class="g">ss</i>:[<i class="b">rsp</i><i class="o">+</i><i class="v">30</i>]</p></div></div>
<div class="row" style="top:754.7812px"><div class="cel ca"><p>00000001800AAA55</p></div><div class="cel cb"><p>FF15 FDD50000</p></div><div class="cel cd"><p>call <i class="s">qword ptr</i> <i class="g">ds</i>:[&lt;&amp;CloseHandle&gt;]</p></div></div>
<div class="row" style="top:768.2031px"><div class="cel ca"><p>00000001800AAA5B</p></div><div class="cel cb"><p>48:C74424 30 00000000</p></div><div class="cel cd"><p>mov <i class="s">qword ptr</i> <i class="g">ss</i>:[<i class="b">rsp</i><i class="o">+</i><i class="v">30</i>],<i class="v">0</i></p></div></div>
<div class="row" style="top:781.625px"><div class="cel ca"><p>00000001800AAA64</p></div><div class="cel cb"><p>8B4424 20</p></div><div class="cel cd"><p>mov <i class="r">eax</i>,<i class="s">dword ptr</i> <i class="g">ss</i>:[<i class="b">rsp</i><i class="o">+</i><i class="v">20</i>]</p></div></div>
<div class="row" style="top:795.0469px"><div class="cel ca"><p>00000001800AAA68</p></div><div class="cel cb"><p>48:83C4 48</p></div><div class="cel cd"><p>add <i class="r">rsp</i>,<i class="v">48</i></p></div></div>
<div class="row" style="top:808.4688px"><div class="cel ca"><p>00000001800AAA6C</p></div><div class="cel cb"><p>C3</p></div><div class="cel cd"><p>ret</p></div></div>
<div class="row" style="top:821.8906px"><div class="cel ca"><p>00000001800AAA6D</p></div><div class="cel cb"><p>CC</p></div><div class="cel cd"><p>int3</p></div></div>
<div class="row" style="top:835.3125px"><div class="cel ca"><p>00000001800AAA6E</p></div><div class="cel cb"><p>CC</p></div><div class="cel cd"><p>int3</p></div></div>
<div class="row" style="top:848.7344px"><div class="cel ca"><p>00000001800AAA6F</p></div><div class="cel cb"><p>CC</p></div><div class="cel cd"><p>int3</p></div></div>
<div class="row" style="top:862.1562px"><div class="cel ca"><p>00000001800AAA70</p></div><div class="cel cb"><p>48:894C24 08</p></div><div class="cel cd"><p>mov <i class="s">qword ptr</i> <i class="g">ss</i>:[<i class="b">rsp</i><i class="o">+</i><i class="v">8</i>],<i class="r">rcx</i></p></div></div>
<div class="row" style="top:875.5781px"><div class="cel ca"><p>00000001800AAA75</p></div><div class="cel cb"><p>57</p></div><div class="cel cd"><p><i class="p">push</i> <i class="r">rdi</i></p></div></div>
</div>
<svg id="jm" style="position:absolute;left:0;top:0" width="1457" height="883" viewBox="0 0 1457 883" fill="none" stroke="#ff2a2a" stroke-width="1.25"><path d="M367.8 140.8859L371.2 144.9859L374.6 140.8859"/><path d="M367.8 167.7297L371.2 171.8297L374.6 167.7297"/><path d="M367.8 275.1047L371.2 279.2047L374.6 275.1047"/><path d="M367.8 342.2141L371.2 346.3141L374.6 342.2141"/><path d="M367.8 436.1672L371.2 440.2672L374.6 436.1672"/><path d="M367.8 530.1203L371.2 534.2203L374.6 530.1203"/><path d="M367.8 583.8078L371.2 587.9078L374.6 583.8078"/><path d="M367.8 655.0172L371.2 650.9172L374.6 655.0172"/></svg>
<div id="hsb"><div id="hth"></div>
<svg style="position:absolute;left:0;top:0" width="1241" height="19" viewBox="0 0 1241 19"><path d="M6.9 10.2L12.7 5.2L11.3 10.2L12.7 15.4Z" fill="#1a1a1a"/><path d="M1234.1 10.4L1228.7 5.4L1230 10.4L1228.7 15.6Z" fill="#1a1a1a"/><g stroke="#3c3c3c" stroke-width="1.3"><path d="M293.5 5.6v8.4M297.3 5.6v8.4M301.1 5.6v8.4"/></g></svg></div>
<div id="vsb"><div id="vth"></div>
<svg style="position:absolute;left:0;top:0" width="15" height="854" viewBox="0 0 15 854"><path d="M10.4 8L5.6 13.3L10.4 12.1L15.2 13.3Z" fill="#1a1a1a"/><path d="M10.4 846.8L5.6 841.6L10.4 842.8L15.2 841.6Z" fill="#1a1a1a"/></svg></div>
<div id="corner"></div>
<svg id="wm" width="1457" height="902" viewBox="0 0 1457 902">
<circle cx="1269" cy="849" r="17.6" fill="none" stroke="#c4c1bc" stroke-width="2.9"/>
<text transform="translate(1260.2,860.3) scale(0.72,1)" x="0" y="0" font-family="'Liberation Serif','DejaVu Serif',serif" font-weight="bold" font-size="33" fill="#c4c1bc" stroke="#c4c1bc" stroke-width="1.7" stroke-linejoin="round">C</text>
<path d="M1299 836.3L1326.8 823.2L1322 831.8L1298.3 840.6Z" fill="#b0b5d1"/>
<path d="M1296.5 845.7L1320 834.9L1319.6 836.4L1301.8 844.6L1299.7 848.7L1295.9 848.9Z" fill="#b4bad6"/>
<path d="M1301.8 845.3L1330.3 832.8L1325.1 842.2L1301.3 850L1299.4 849.4Z" fill="#c6daed"/>
<path d="M1300.4 852.2L1323.4 844.2L1320 852.4L1299 857.6Z" fill="#d4e4f2"/>
<text x="1294.9" y="868.2" font-family="'Liberation Serif','DejaVu Serif',serif" font-weight="bold" font-size="9.8" fill="#9b9795" textLength="32.6" lengthAdjust="spacingAndGlyphs">ANTIY</text>
<text transform="translate(1334.3,850.9) scale(1.03,0.93)" x="0" y="15.4" letter-spacing="6.7" font-family="'Noto Sans CJK SC','WenQuanYi Zen Hei',sans-serif" font-weight="900" font-size="40" fill="#aaa5a1">安天</text>
</svg>
</body></html>
